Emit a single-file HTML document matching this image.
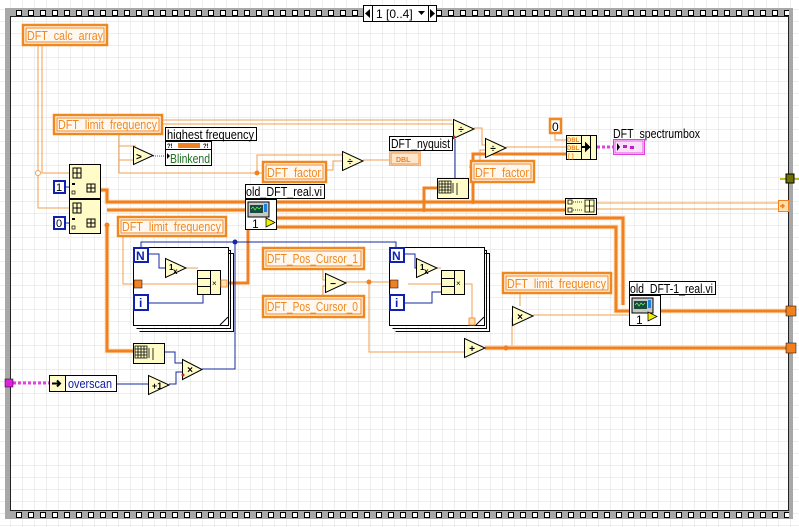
<!DOCTYPE html>
<html><head><meta charset="utf-8"><style>
html,body{margin:0;padding:0;background:#fff;overflow:hidden;width:799px;height:527px;}
svg{display:block;font-family:"Liberation Sans",sans-serif;}
</style></head><body>
<svg width="799" height="527" viewBox="0 0 799 527" xmlns="http://www.w3.org/2000/svg">
<defs>
<pattern id="g" x="10" y="9" width="12" height="12" patternUnits="userSpaceOnUse">
<rect width="12" height="12" fill="#fff"/><path d="M0 0H12M0 0V12" stroke="#dcdcdc" stroke-width="1"/>
</pattern>
<pattern id="sqt" x="14" y="8" width="12" height="9" patternUnits="userSpaceOnUse">
<rect width="12" height="9" fill="#a8a8a8"/><rect x="2.5" y="2.5" width="5" height="5" fill="#fff" stroke="#000" stroke-width="1"/>
</pattern>
<pattern id="sqb" x="14" y="510" width="12" height="9" patternUnits="userSpaceOnUse">
<rect width="12" height="9" fill="#a8a8a8"/><rect x="2.5" y="2.5" width="5" height="5" fill="#fff" stroke="#000" stroke-width="1"/>
</pattern>
</defs>
<rect width="799" height="527" fill="url(#g)"/>
<rect x="5" y="8" width="788" height="9" fill="url(#sqt)"/>
<rect x="5" y="510" width="788" height="9" fill="url(#sqb)"/>
<rect x="5" y="8" width="5" height="511" fill="#a8a8a8"/>
<line x1="10.5" y1="16" x2="10.5" y2="511" stroke="#222"/>
<rect x="789" y="8" width="4" height="511" fill="#a8a8a8"/>
<line x1="788.5" y1="16" x2="788.5" y2="511" stroke="#222"/>
<line x1="10" y1="16.5" x2="789" y2="16.5" stroke="#222"/>
<line x1="10" y1="510.5" x2="789" y2="510.5" stroke="#222"/>
<rect x="363.5" y="5.5" width="73" height="16" fill="#fff" stroke="#000"/>
<line x1="372.5" y1="6" x2="372.5" y2="21" stroke="#000"/><line x1="428.5" y1="6" x2="428.5" y2="21" stroke="#000"/>
<path d="M370 9V18L365 13.5Z" fill="#000"/><path d="M430 9V18L435 13.5Z" fill="#000"/>
<text x="376" y="18" font-size="12">1 [0..4]</text><path d="M418 11H425L421.5 15Z" fill="#000"/>

<g fill="none" stroke-linejoin="miter">
<g stroke="#f0a050" stroke-width="1">
<path d="M38 45V208H70M42 45V173H70"/>
<path d="M162 124H455M162 120H452"/>
<path d="M119 134V146H136M119 134V160H136M119 160V173H257M257 173V155H342M257 173H262"/>
<path d="M326 170H333V161H343M363 160H389"/>
<path d="M474 128H482V145H486M469 167H480V150H486M506 147H566"/>
<path d="M555 133V140H566"/>
<path d="M323 247V257M323 270V280H327M323 295V286H327M345 282H389M369 282V352H464"/>
<path d="M221 284H230"/>
<path d="M520 294V306M533 315H630M520 318H512V348"/>
<path d="M123 236V284H134"/>
</g>
<g stroke="#fde4c4" stroke-width="5">
<path d="M100 190H107V202H566M107 210H566M276 218H623V305M276 227H616V311H630M107 225V351H133M485 348H786M660 311H786"/>
</g>
<g stroke="#f08020" stroke-width="3">
<path d="M100 190H107V202H566M107 210H566M276 218H623V305M276 227H616V311H630M107 225V351H133M485 348H786M660 311H786"/>
<path d="M228 283H248V230M437 188H424V210M473 202V154H566"/>
</g>
<path d="M597 203H778M597 209H778" stroke="#f0a050" stroke-width="1"/>
<g stroke="#1428a0" stroke-width="1">
<path d="M141 247V242H396V247M235 242V369H202"/>
<path d="M164 352H175V363H182M116 384H148M169 384H176V372H182"/>
<path d="M455 139V178"/>
</g>
<path d="M13 383H49" stroke="#e040e0" stroke-width="3" stroke-dasharray="3 2"/>
<path d="M597 147H613" stroke="#e040e0" stroke-width="3" stroke-dasharray="3 2"/>
<path d="M153 156H165" stroke="#208020" stroke-dasharray="1 1"/>
<path d="M780 179H799" stroke="#c0c020" stroke-width="2"/>
</g>
<circle cx="235" cy="242" r="2.5" fill="#1428a0"/>
<circle cx="257" cy="173" r="2.5" fill="#f08020"/>
<circle cx="107" cy="225" r="2.5" fill="#f08020"/>
<circle cx="369" cy="282" r="2.5" fill="#f08020"/>
<circle cx="506" cy="348" r="2.5" fill="#f08020"/>
<circle cx="473" cy="202" r="2" fill="#f08020"/>
<circle cx="424" cy="210" r="2" fill="#f08020"/>
<circle cx="38" cy="173" r="2.5" fill="#fff" stroke="#f0a050"/>

<g font-size="12.5" fill="#f08820">
<g stroke="#f08820" fill="#fff8f0"><rect x="23" y="25" width="84" height="20" stroke-width="2.5"/><rect x="26" y="28" width="78" height="14" stroke-width="1"/></g>
<text x="27" y="40" textLength="76" lengthAdjust="spacingAndGlyphs">DFT_calc_array</text>
<g stroke="#f08820" fill="#fff8f0"><rect x="54" y="115" width="108" height="19" stroke-width="2.5"/><rect x="57" y="118" width="102" height="13" stroke-width="1"/></g>
<text x="58" y="129" textLength="99" lengthAdjust="spacingAndGlyphs">DFT_limit_frequency</text>
<g stroke="#f08820" fill="#fff8f0"><rect x="118" y="217" width="108" height="19" stroke-width="2.5"/><rect x="121" y="220" width="102" height="13" stroke-width="1"/></g>
<text x="122" y="231" textLength="99" lengthAdjust="spacingAndGlyphs">DFT_limit_frequency</text>
<g stroke="#f08820" fill="#fff8f0"><rect x="503" y="273" width="108" height="20" stroke-width="2.5"/><rect x="506" y="276" width="102" height="14" stroke-width="1"/></g>
<text x="507" y="288" textLength="99" lengthAdjust="spacingAndGlyphs">DFT_limit_frequency</text>
<g stroke="#f08820" fill="#fff8f0"><rect x="263" y="162" width="63" height="20" stroke-width="2.5"/><rect x="266" y="165" width="57" height="14" stroke-width="1"/></g>
<text x="267" y="177" textLength="54" lengthAdjust="spacingAndGlyphs">DFT_factor</text>
<g stroke="#f08820" fill="#fff8f0"><rect x="471" y="161" width="63" height="21" stroke-width="2.5"/><rect x="474" y="164" width="57" height="15" stroke-width="1"/></g>
<text x="475" y="177" textLength="54" lengthAdjust="spacingAndGlyphs">DFT_factor</text>
<g stroke="#f08820" fill="#fff8f0"><rect x="263" y="248" width="101" height="21" stroke-width="2.5"/><rect x="266" y="251" width="95" height="15" stroke-width="1"/></g>
<text x="267" y="263" textLength="91" lengthAdjust="spacingAndGlyphs">DFT_Pos_Cursor_1</text>
<g stroke="#f08820" fill="#fff8f0"><rect x="263" y="296" width="101" height="21" stroke-width="2.5"/><rect x="266" y="299" width="95" height="15" stroke-width="1"/></g>
<text x="267" y="311" textLength="91" lengthAdjust="spacingAndGlyphs">DFT_Pos_Cursor_0</text>
<rect x="550" y="119" width="11" height="14" fill="#fff" stroke="#f08820" stroke-width="2.5"/>
<text x="552" y="131" fill="#000" font-size="12">0</text>
</g>
<rect x="54" y="181" width="11" height="12" fill="#fff" stroke="#1020b0" stroke-width="2"/><text x="56" y="191" font-size="11">1</text>
<rect x="54" y="217" width="11" height="12" fill="#fff" stroke="#1020b0" stroke-width="2"/><text x="56" y="227" font-size="11">0</text>
<path d="M65 187H70M65 223H70" stroke="#1020b0"/>

<g fill="#fffcc8" stroke="#000">
<rect x="69.5" y="164.5" width="31" height="34"/><rect x="69.5" y="199.5" width="31" height="34"/>
</g>
<g stroke="#000" fill="none" stroke-width="1">
<path d="M73 168h8v10h-8zM73 173h8M77 168v10M73 203h8v10h-8zM73 208h8M77 203v10"/>
<path d="M87 184h8v8h-8zM87 188h8M91 184v8M87 219h8v8h-8zM87 223h8M91 219v8"/>
</g>
<rect x="72" y="183" width="3" height="2" fill="#000"/><rect x="72" y="191" width="3" height="3" fill="none" stroke="#000" stroke-width=".7"/>
<rect x="72" y="218" width="3" height="2" fill="#000"/><rect x="72" y="226" width="3" height="3" fill="none" stroke="#000" stroke-width=".7"/>

<path d="M133.5 146.5V164.5L153 155.5Z" fill="#fffcc8" stroke="#000"/><text x="136" y="160" font-size="10" font-weight="bold">&gt;</text>
<rect x="165.5" y="127.5" width="91" height="13" fill="#fff" stroke="#000"/><text x="167" y="139" font-size="12.5" textLength="87" lengthAdjust="spacingAndGlyphs">highest frequency</text>
<rect x="165.5" y="141.5" width="46" height="24" fill="#fff" stroke="#000"/>
<line x1="166" y1="149.5" x2="211" y2="149.5" stroke="#000"/>
<rect x="178" y="143" width="22" height="5" fill="#f08020"/>
<text x="167" y="148" font-size="6" font-weight="bold">?!</text><text x="203" y="148" font-size="6" font-weight="bold">?!</text>
<text x="170" y="163" font-size="12.5" fill="#207020" textLength="40" lengthAdjust="spacingAndGlyphs">Blinkend</text><path d="M167 153v6l3-3z" fill="#000"/>

<g fill="#fffcc8" stroke="#000">
<path d="M342.5 151.5V170.5L363 161Z"/>
<path d="M453.5 119.5V138.5L474 129Z"/>
<path d="M485.5 138.5V157.5L506 148Z"/>
<path d="M325.5 273.5V292.5L346 283Z"/>
<path d="M464.5 338.5V357.5L485 348Z"/>
<path d="M512.5 306.5V325.5L533 316Z"/>
<path d="M182.5 359.5V379.5L202 369.5Z"/>
<path d="M148.5 375.5V394.5L169 385Z"/>
</g>
<g font-size="10" font-weight="bold" text-anchor="middle">
<text x="350" y="165">÷</text><text x="461" y="133">÷</text><text x="493" y="152">÷</text>
<text x="333" y="287">−</text><text x="472" y="352">+</text><text x="520" y="320">×</text>
<text x="190" y="373">×</text><text x="157" y="389" font-size="9">+1</text>
</g>
<circle cx="454" cy="137" r="1.5" fill="#d02020"/><circle cx="183" cy="375" r="1.5" fill="#d02020"/>

<rect x="389.5" y="136.5" width="63" height="14" fill="#fff" stroke="#000"/><text x="391" y="148" font-size="12.5" textLength="59" lengthAdjust="spacingAndGlyphs">DFT_nyquist</text>
<rect x="389.5" y="151.5" width="31" height="14" fill="#fde6cc" stroke="#f0b070"/>
<rect x="391" y="153" width="28" height="11" fill="#fde6cc" stroke="#f08020" stroke-width=".8"/>
<text x="396" y="162" font-size="7" font-weight="bold" fill="#f08020">DBL</text>

<g fill="#fffcc8" stroke="#000"><rect x="437.5" y="178.5" width="31" height="20"/><rect x="133.5" y="343.5" width="31" height="20"/></g>
<g stroke="#000" fill="none" stroke-width=".8">
<path d="M439 181h12v12h-12zM439 184h12M439 187h12M439 190h12M442 181v12M445 181v12M448 181v12M453 183v10M457 183v12"/>
<path d="M135 346h12v12h-12zM135 349h12M135 352h12M135 355h12M138 346v12M141 346v12M144 346v12M149 348v10M153 348v12"/>
</g>

<rect x="566.5" y="135.5" width="30" height="24" fill="#fffcc8" stroke="#000"/>
<path d="M566 143.5H581M566 151.5H581M581.5 136V159M590.5 136V159" stroke="#000"/>
<g font-size="6" font-weight="bold" fill="#f08020"><text x="567" y="142">DBL</text><text x="567" y="150">DBL</text><text x="568" y="158">[ ]</text></g>
<path d="M581 147h8l-3-3v6l3-3" stroke="#000" stroke-width="2" fill="none"/>
<text x="613" y="138" font-size="12.5" textLength="87" lengthAdjust="spacingAndGlyphs">DFT_spectrumbox</text>
<rect x="613.5" y="139.5" width="31" height="15" fill="#fbe0fb" stroke="#e040e0"/>
<rect x="615" y="141" width="28" height="12" fill="none" stroke="#e040e0" stroke-width=".8"/>
<path d="M617 143v8l3-4z" fill="#000"/><rect x="623" y="145" width="4" height="3" fill="#c020c0"/><rect x="630" y="146" width="4" height="3" fill="#c020c0"/>

<rect x="565.5" y="198.5" width="31" height="16" fill="#fffcc8" stroke="#000"/>
<g stroke="#000" fill="none" stroke-width=".8"><path d="M568 200h4v4h-4zM568 208h4v4h-4zM585 200h9v12h-9zM585 206h9M589.5 200v12"/><path d="M573 202h10M573 210h10" stroke-dasharray="1 1"/></g>
<rect x="778.5" y="200.5" width="10" height="11" fill="#fde0b0" stroke="#f08020"/><path d="M780 206h4m-2-2 2 2-2 2" stroke="#f08020" stroke-width="1.5" fill="none"/>
<rect x="786" y="174" width="8" height="9" fill="#707000" stroke="#000"/>

<rect x="245.5" y="184.5" width="79" height="14" fill="#fff" stroke="#000"/><text x="246" y="196" font-size="12.5" textLength="76" lengthAdjust="spacingAndGlyphs">old_DFT_real.vi</text>
<rect x="245.5" y="199.5" width="31" height="30" fill="#fff" stroke="#000"/>
<rect x="248" y="202" width="21" height="15" fill="#c8c8c8" stroke="#000"/><rect x="250" y="205" width="13" height="8" fill="#1a4a3a"/><path d="M251 209l2-2 2 3 2-3 2 2 2-2" stroke="#60ff60" stroke-width=".7" fill="none"/>
<rect x="264" y="204" width="3" height="8" fill="#2080e0"/>
<text x="252" y="228" font-size="12">1</text><path d="M266 218v9l9-4.5z" fill="#f0f000" stroke="#000" stroke-width=".7"/>
<rect x="629.5" y="281.5" width="86" height="13" fill="#fff" stroke="#000"/><text x="630" y="293" font-size="12.5" textLength="83" lengthAdjust="spacingAndGlyphs">old_DFT-1_real.vi</text>
<rect x="629.5" y="295.5" width="31" height="30" fill="#fff" stroke="#000"/>
<rect x="632" y="298" width="21" height="15" fill="#c8c8c8" stroke="#000"/><rect x="634" y="301" width="13" height="8" fill="#1a4a3a"/><path d="M635 305l2-2 2 3 2-3 2 2 2-2" stroke="#60ff60" stroke-width=".7" fill="none"/>
<rect x="648" y="300" width="3" height="8" fill="#2080e0"/>
<text x="636" y="324" font-size="12">1</text><path d="M648 312v9l9-4.5z" fill="#f0f000" stroke="#000" stroke-width=".7"/>

<g fill="none" stroke="#000">
<path d="M136.5 250.5H230.5V328.5H136.5M139.5 253.5H233.5V331.5H139.5"/>
<rect x="133.5" y="247.5" width="95" height="78" fill="#fff"/>
<path d="M392.5 250.5H486.5V328.5H392.5M395.5 253.5H489.5V331.5H395.5"/>
<rect x="389.5" y="247.5" width="95" height="78" fill="#fff"/>
</g>
<path d="M220 325l8-8" stroke="#000" fill="none"/><path d="M476 325l8-8" stroke="#000" fill="none"/>
<g stroke="#1428a0" fill="none"><path d="M148 254H159V268H165M148 303H203V295"/><path d="M404 254H415V268H416M404 303H432V292H441"/></g>
<g stroke="#f0a050" fill="none"><path d="M186 268H198M142 284H198M408 284H441M437 268H441M463 284H472V318"/></g>
<path d="M165.5 258.5V277.5L186 268Z" fill="#fffcc8" stroke="#000"/><path d="M416.5 258.5V277.5L437 268Z" fill="#fffcc8" stroke="#000"/>
<text x="169" y="270" font-size="8" font-weight="bold">1</text><text x="173" y="274" font-size="8" font-weight="bold">x</text>
<text x="420" y="270" font-size="8" font-weight="bold">1</text><text x="424" y="274" font-size="8" font-weight="bold">x</text>
<g fill="#fff" stroke="#1020b0" stroke-width="2">
<rect x="134" y="248" width="14" height="14"/><rect x="134" y="295" width="14" height="15"/>
<rect x="390" y="248" width="14" height="14"/><rect x="390" y="295" width="14" height="15"/>
</g>
<g font-size="12" font-weight="bold" fill="#1020b0"><text x="136" y="260">N</text><text x="139" y="307">i</text><text x="392" y="260">N</text><text x="395" y="307">i</text></g>
<rect x="134" y="280" width="8" height="8" fill="#f08020" stroke="#000" stroke-width=".5"/>
<rect x="390" y="280" width="8" height="8" fill="#f08020" stroke="#000" stroke-width=".5"/>
<g fill="#fffcc8" stroke="#000"><rect x="197.5" y="270.5" width="23" height="24"/><rect x="441.5" y="270.5" width="23" height="24"/></g>
<path d="M197 278.5H210M197 286.5H210M210.5 271V294M441 278.5H454M441 286.5H454M454.5 271V294" stroke="#000"/>
<text x="212" y="286" font-size="8">×</text><text x="456" y="286" font-size="8">×</text>
<rect x="221" y="280" width="6" height="7" fill="#fde0b0" stroke="#f08020" stroke-width=".8"/>
<rect x="469" y="318" width="6" height="7" fill="#fde0b0" stroke="#f08020" stroke-width=".8"/>

<rect x="5" y="379" width="8" height="8" fill="#e020e0" stroke="#000" stroke-width=".5"/>
<rect x="49.5" y="375.5" width="67" height="16" fill="#fff" stroke="#000"/>
<rect x="49.5" y="375.5" width="16" height="16" fill="#fffcc8" stroke="#000"/>
<path d="M52 383.5h8m-3-3 3 3-3 3" stroke="#000" stroke-width="2" fill="none"/>
<text x="68" y="388" font-size="12.5" fill="#1020a0" textLength="44" lengthAdjust="spacingAndGlyphs">overscan</text>
<rect x="786" y="306" width="10" height="10" fill="#f08020" stroke="#000" stroke-width=".5"/>
<rect x="786" y="343" width="10" height="10" fill="#f08020" stroke="#000" stroke-width=".5"/>
</svg>
</body></html>
